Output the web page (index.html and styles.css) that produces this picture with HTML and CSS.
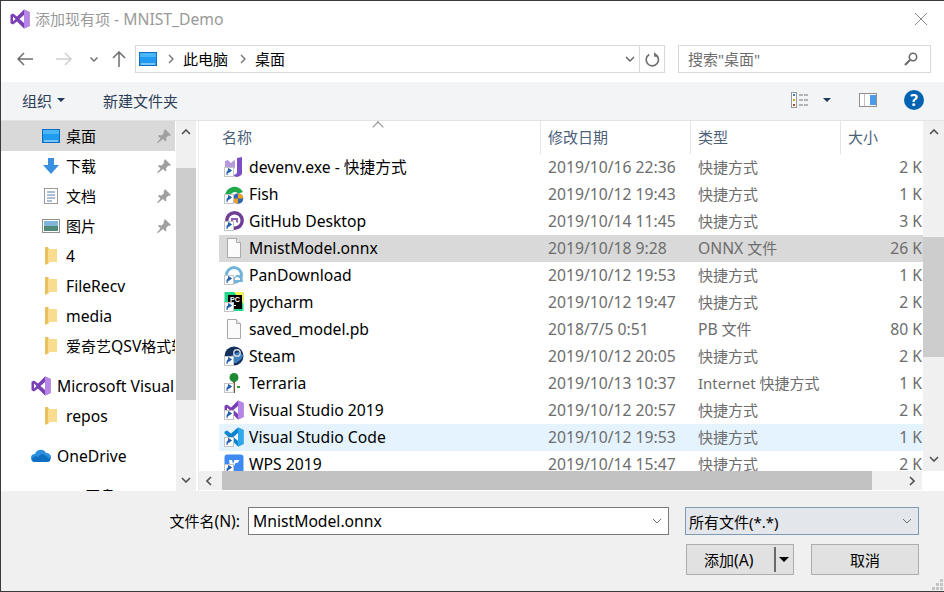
FILE: index.html
```html
<!DOCTYPE html>
<html lang="zh-CN">
<head>
    <meta charset="UTF-8">
    <title>添加现有项 - MNIST_Demo</title>
    <link rel="stylesheet" href="styles.css">
</head>
<body>
<svg class="defs" width="0" height="0">
    <defs>
        <symbol id="i-link" viewBox="0 0 20 20">
            <rect x="0.500" y="10.500" width="9" height="9" fill="#fff" stroke="#c4c4c4"/>
            <path d="M3 18v-2.500q0-2 2-2M4.500 11.500l3 2-3 2z" fill="#1f5fae" stroke="#1f5fae"/>
        </symbol>
        <symbol id="i-vs" viewBox="0 0 20 20">
            <path d="M14 0.500l5.500 2.500v14l-5.500 2.500-7-7-4 3-2.500-1.300v-8.400l2.500-1.300 4 3z" fill="#7b3fb5"/>
            <path d="M14 0.500l5.500 2.500v14l-5.500 2.500z" fill="#b685e6"/>
            <path d="M14 6l-4.500 4 4.500 4zM3 7.500v5l2.500-2.500z" fill="#fff"/>
        </symbol>
        <symbol id="i-code" viewBox="0 0 20 20">
            <path d="M14 0.500l5.500 2.500v14l-5.500 2.500-7-7-4 3-2.500-1.300v-1.700l3.500-3-3.500-3v-1.700l2.500-1.300 4 3z" fill="#0a84cf"/>
            <path d="M14 0.500l5.500 2.500v14l-5.500 2.500z" fill="#2fa9ec"/>
            <path d="M14 6l-4.500 4 4.500 4z" fill="#fff"/>
        </symbol>
        <symbol id="i-devenv" viewBox="0 0 20 20">
            <path d="M1 4l3-1 3 3 3-3 1 1v7l-4 3-3-2-3 2z" fill="#b79ade"/>
            <path d="M13 1l5-1v17q-2 3-6 3l-4-2q5 0 5-3z" fill="#7d4fc4"/>
        </symbol>
        <symbol id="i-fish" viewBox="0 0 20 20">
            <path d="M1 12a9.500 9.500 0 0 1 18-4l-4.500 1.500a5 5 0 0 0-8.500 2.500z" fill="#1fa94a"/>
            <circle cx="14" cy="14.500" r="5.300" fill="#2f66b5"/>
            <path d="M14 9.200a5.300 5.300 0 0 1 5.300 5.300H14zM8.700 14.500H14v5.300a5.300 5.300 0 0 1-5.300-5.300z" fill="#f0a020"/>
        </symbol>
        <symbol id="i-github" viewBox="0 0 20 20">
            <circle cx="10.500" cy="9.500" r="7.700" fill="#fff" stroke="#6e3e97" stroke-width="3.400"/>
            <path d="M7 7h7v5l-2-1v-2h-3v2H7z" fill="#8e5fb5"/>
        </symbol>
        <symbol id="i-pan" viewBox="0 0 20 20">
            <circle cx="10" cy="10" r="7.500" fill="#fff" stroke="#72b3d8" stroke-width="3"/>
            <path d="M6 17q-1-5 5-5 1-3 4-2 4 1 4 7z" fill="#72b3d8"/>
            <path d="M11 15q-1-2 2-3 3 0 3 3z" fill="#fff"/>
        </symbol>
        <symbol id="i-pycharm" viewBox="0 0 20 20">
            <rect x="0.500" y="0" width="19" height="19" fill="#21d789"/>
            <path d="M10 0h9.500v12z" fill="#fcf84a"/>
            <path d="M0.500 9l7 10h-7z" fill="#07c3f2"/>
            <rect x="4" y="3" width="14" height="14" fill="#000"/>
            <text class="pc-mark" x="6" y="10">PC</text>
            <rect x="6" y="13" width="6" height="1" fill="#fff"/>
        </symbol>
        <symbol id="i-steam" viewBox="0 0 20 20">
            <circle cx="10" cy="10" r="9.500" fill="#14305c"/>
            <path d="M1 13l6 3q4 3 8-1 4-3 4-6l-5-3z" fill="#3f7fc0"/>
            <circle cx="13" cy="7" r="3.200" fill="none" stroke="#d5dbe6" stroke-width="1.400"/>
            <circle cx="6.500" cy="14" r="2.200" fill="#d5dbe6"/>
        </symbol>
        <symbol id="i-terraria" viewBox="0 0 20 20">
            <rect x="9" y="7" width="2" height="13" fill="#7d5a3c"/>
            <circle cx="10" cy="4.500" r="4.500" fill="#1f8a34"/>
            <rect x="13" y="13" width="3" height="2" fill="#2f9a40"/>
        </symbol>
        <symbol id="i-wps" viewBox="0 0 20 20">
            <rect x="0.500" y="0.500" width="19" height="19" rx="3" fill="#3d8bf2"/>
            <path d="M5 6h3l1 4 1.500-4h5l-2 3h-2l-3 6-2 0z" fill="#fff"/>
        </symbol>
        <symbol id="i-doc" viewBox="0 0 20 20">
            <path d="M3.500 0.500h9l4 4v15h-13z" fill="#fbfbfb" stroke="#a8a8a8"/>
            <path d="M12.500 0.500v4h4" fill="#eee" stroke="#a8a8a8"/>
        </symbol>
        <symbol id="i-desk" viewBox="0 0 18 14">
            <rect x="0.500" y="0.500" width="17" height="13" fill="#1f9bf0" stroke="#0c6cc4"/>
            <rect x="1" y="1" width="16" height="4" fill="#49b6f7"/>
            <path d="M2 12h14" stroke="#d7efff"/>
        </symbol>
        <symbol id="i-folder" viewBox="0 0 14 18">
            <path d="M1 0h3l1 2v14l-4 2z" fill="#e8c15c"/>
            <path d="M4 2h9v13H5l-1 1z" fill="#f9dc8e"/>
        </symbol>
        <symbol id="i-pin" viewBox="0 0 14 14">
            <path d="M8 0l6 6-1.500 1-1-.5-2.500 2.500.5 2.500-1 1-2.500-2.500L1 14l-1-.5 3.500-4L1 7l1-1 2.500.5L7 4l-.5-1z" fill="#a0a0a0"/>
        </symbol>
    </defs>
</svg>

<div class="window">
    <div class="titlebar">
        <svg class="title-icon"><use href="#i-vs"/></svg>
        <span class="title-text">添加现有项<span class="latin"> - MNIST_Demo</span></span>
        <svg class="close" viewBox="0 0 14 14"><path d="M1 1l12 12M13 1L1 13" stroke="#8a8a8a" fill="none"/></svg>
    </div>

    <div class="navbar">
        <svg class="nav-back" viewBox="0 0 16 14"><path d="M1 7h15M7 1L1 7l6 6" stroke="#6d6d6d" stroke-width="1.500" fill="none"/></svg>
        <svg class="nav-forward" viewBox="0 0 16 14"><path d="M0 7h15M9 1l6 6-6 6" stroke="#d0d0d0" stroke-width="1.500" fill="none"/></svg>
        <svg class="nav-recent" viewBox="0 0 8 5"><path d="M0.500 0.500L4 4l3.500-3.500" stroke="#6d6d6d" stroke-width="1.400" fill="none"/></svg>
        <svg class="nav-up" viewBox="0 0 14 16"><path d="M7 16V1M1 7l6-6 6 6" stroke="#6d6d6d" stroke-width="1.500" fill="none"/></svg>
        <div class="address">
            <svg class="addr-icon"><use href="#i-desk"/></svg>
            <svg class="crumb-sep crumb-first" viewBox="0 0 6 10"><path d="M1 1l4 4-4 4" stroke="#707070" stroke-width="1.300" fill="none"/></svg>
            <span class="crumb">此电脑</span>
            <svg class="crumb-sep" viewBox="0 0 6 10"><path d="M1 1l4 4-4 4" stroke="#707070" stroke-width="1.300" fill="none"/></svg>
            <span class="crumb">桌面</span>
            <svg class="addr-drop" viewBox="0 0 10 6"><path d="M1 1l4 4 4-4" stroke="#606060" stroke-width="1.400" fill="none"/></svg>
            <div class="addr-refresh">
                <svg viewBox="0 0 14 14"><path d="M9.500 2.200A5.700 5.700 0 1 1 4 2.300" stroke="#6d6d6d" stroke-width="1.500" fill="none"/><path d="M8.500 0v4.500H13z" fill="#6d6d6d"/></svg>
            </div>
        </div>
        <div class="search">
            <span class="crumb">搜索"桌面"</span>
            <svg viewBox="0 0 14 14"><circle cx="9" cy="5" r="3.700" stroke="#666" stroke-width="1.500" fill="none"/><path d="M6 8l-5 5" stroke="#666" stroke-width="2"/></svg>
        </div>
    </div>

    <div class="toolbar">
        <span class="tool-menu">组织<i class="caret"></i></span>
        <span class="tool-new">新建文件夹</span>
        <svg class="tool-view" viewBox="0 0 18 16">
            <rect x="0.500" y="0.500" width="5" height="15" fill="#fff" stroke="#999"/>
            <rect x="2" y="2" width="2" height="2" fill="#3a7db5"/>
            <rect x="2" y="7" width="2" height="2" fill="#c7a02c"/>
            <rect x="2" y="12" width="2" height="2" fill="#b5432a"/>
            <path d="M8 3h10M8 8h10M8 13h10" stroke="#777" stroke-dasharray="4 1"/>
        </svg>
        <i class="caret tool-caret"></i>
        <svg class="tool-pane" viewBox="0 0 18 14">
            <rect x="0.500" y="0.500" width="17" height="13" fill="#fff" stroke="#8f8f8f"/>
            <rect x="5" y="1" width="1" height="12" fill="#c0c0c0"/>
            <rect x="11" y="2" width="6" height="10" fill="#4a9be8"/>
        </svg>
        <span class="tool-help">?</span>
    </div>

    <div class="main">
        <div class="sidebar">
            <div class="side-row is-current"><svg class="side-icon desk"><use href="#i-desk"/></svg><span>桌面</span><svg class="pin"><use href="#i-pin"/></svg></div>
            <div class="side-row">
                <svg class="side-icon desk" viewBox="0 0 18 16"><path d="M6 0h6v7h5l-8 9-8-9h5z" fill="#3b8fe0"/></svg>
                <span>下载</span><svg class="pin"><use href="#i-pin"/></svg>
            </div>
            <div class="side-row">
                <svg class="side-icon desk" viewBox="0 0 18 16"><rect x="2.500" y="0.500" width="13" height="15" fill="#fff" stroke="#9a9a9a"/><path d="M5 4h8M5 7h8M5 10h8M5 13h5" stroke="#5a7fa8"/></svg>
                <span>文档</span><svg class="pin"><use href="#i-pin"/></svg>
            </div>
            <div class="side-row">
                <svg class="side-icon desk" viewBox="0 0 18 14"><rect x="0.500" y="0.500" width="17" height="13" fill="#fff" stroke="#8f8f8f"/><rect x="2" y="2" width="14" height="5" fill="#7fb5dc"/><rect x="2" y="7" width="14" height="5" fill="#4f8a76"/></svg>
                <span>图片</span><svg class="pin"><use href="#i-pin"/></svg>
            </div>
            <div class="side-row"><svg class="side-icon folder"><use href="#i-folder"/></svg><span class="latin">4</span></div>
            <div class="side-row"><svg class="side-icon folder"><use href="#i-folder"/></svg><span class="latin">FileRecv</span></div>
            <div class="side-row"><svg class="side-icon folder"><use href="#i-folder"/></svg><span class="latin">media</span></div>
            <div class="side-row"><svg class="side-icon folder"><use href="#i-folder"/></svg><span>爱奇艺<span class="latin">QSV</span>格式转换</span></div>
            <div class="side-row side-group"><svg class="group-icon"><use href="#i-vs"/></svg><span class="latin">Microsoft Visual Studio</span></div>
            <div class="side-row"><svg class="side-icon folder"><use href="#i-folder"/></svg><span class="latin">repos</span></div>
            <div class="side-row side-group">
                <svg class="group-icon" viewBox="0 0 20 14"><path d="M4 13a4 4 0 0 1 0-8 6 6 0 0 1 11-1 4.500 4.500 0 0 1 1 9z" fill="#2a8fe0"/><path d="M1 10q2-4 6-2 4-5 8-1l4 3q1 3-3 3H4q-3 0-3-3z" fill="#0f6fc0"/></svg>
                <span class="latin">OneDrive</span>
            </div>
            <div class="side-row side-group">
                <svg class="group-icon" viewBox="0 0 20 14"><circle cx="10" cy="9" r="6" fill="#3d8bf2"/></svg>
                <span>wps网盘</span>
            </div>
        </div>
        <div class="side-scroll">
            <svg class="arrow" viewBox="0 0 10 6"><path d="M1 5l4-4 4 4" stroke="#505050" stroke-width="1.600" fill="none"/></svg>
            <div class="side-thumb"></div>
            <svg class="arrow arrow-end" viewBox="0 0 10 6"><path d="M1 1l4 4 4-4" stroke="#505050" stroke-width="1.600" fill="none"/></svg>
        </div>

        <div class="files">
            <div class="files-top">
                <div class="list">
                    <div class="list-head">
                        <div class="col col-name">名称<i class="sort"></i></div>
                        <div class="col">修改日期</div>
                        <div class="col">类型</div>
                        <div class="col">大小</div>
                    </div>
                    <div class="row"><div class="name"><svg><use href="#i-devenv"/><use href="#i-link"/></svg>devenv.exe - 快捷方式</div><div class="cell date">2019/10/16 22:36</div><div class="cell">快捷方式</div><div class="size">2 K</div></div>
                    <div class="row"><div class="name"><svg><use href="#i-fish"/><use href="#i-link"/></svg>Fish</div><div class="cell date">2019/10/12 19:43</div><div class="cell">快捷方式</div><div class="size">1 K</div></div>
                    <div class="row"><div class="name"><svg><use href="#i-github"/><use href="#i-link"/></svg>GitHub Desktop</div><div class="cell date">2019/10/14 11:45</div><div class="cell">快捷方式</div><div class="size">3 K</div></div>
                    <div class="row is-selected"><div class="name"><svg><use href="#i-doc"/></svg>MnistModel.onnx</div><div class="cell date">2019/10/18 9:28</div><div class="cell"><span class="latin">ONNX</span> 文件</div><div class="size">26 K</div></div>
                    <div class="row"><div class="name"><svg><use href="#i-pan"/><use href="#i-link"/></svg>PanDownload</div><div class="cell date">2019/10/12 19:53</div><div class="cell">快捷方式</div><div class="size">1 K</div></div>
                    <div class="row"><div class="name"><svg><use href="#i-pycharm"/><use href="#i-link"/></svg>pycharm</div><div class="cell date">2019/10/12 19:47</div><div class="cell">快捷方式</div><div class="size">2 K</div></div>
                    <div class="row"><div class="name"><svg><use href="#i-doc"/></svg>saved_model.pb</div><div class="cell date">2018/7/5 0:51</div><div class="cell"><span class="latin">PB</span> 文件</div><div class="size">80 K</div></div>
                    <div class="row"><div class="name"><svg><use href="#i-steam"/><use href="#i-link"/></svg>Steam</div><div class="cell date">2019/10/12 20:05</div><div class="cell">快捷方式</div><div class="size">2 K</div></div>
                    <div class="row"><div class="name"><svg><use href="#i-terraria"/><use href="#i-link"/></svg>Terraria</div><div class="cell date">2019/10/13 10:37</div><div class="cell">Internet 快捷方式</div><div class="size">1 K</div></div>
                    <div class="row"><div class="name"><svg><use href="#i-vs"/><use href="#i-link"/></svg>Visual Studio 2019</div><div class="cell date">2019/10/12 20:57</div><div class="cell">快捷方式</div><div class="size">2 K</div></div>
                    <div class="row is-hover"><div class="name"><svg><use href="#i-code"/><use href="#i-link"/></svg>Visual Studio Code</div><div class="cell date">2019/10/12 19:53</div><div class="cell">快捷方式</div><div class="size">1 K</div></div>
                    <div class="row"><div class="name"><svg><use href="#i-wps"/><use href="#i-link"/></svg>WPS 2019</div><div class="cell date">2019/10/14 15:47</div><div class="cell">快捷方式</div><div class="size">2 K</div></div>
                </div>
                <div class="list-scroll">
                    <svg class="arrow" viewBox="0 0 10 6"><path d="M1 5l4-4 4 4" stroke="#505050" stroke-width="1.600" fill="none"/></svg>
                    <div class="list-thumb"></div>
                    <svg class="arrow arrow-end" viewBox="0 0 10 6"><path d="M1 1l4 4 4-4" stroke="#505050" stroke-width="1.600" fill="none"/></svg>
                </div>
            </div>
            <div class="hscroll">
                <svg class="harrow" viewBox="0 0 6 10"><path d="M5 1L1 5l4 4" stroke="#505050" stroke-width="1.600" fill="none"/></svg>
                <div class="hthumb"></div>
                <svg class="harrow" viewBox="0 0 6 10"><path d="M1 1l4 4-4 4" stroke="#505050" stroke-width="1.600" fill="none"/></svg>
            </div>
        </div>
    </div>

    <div class="footer">
        <div class="file-row">
            <label class="file-label">文件名<span class="latin">(N):</span></label>
            <div class="file-input">
                <span class="latin">MnistModel.onnx</span>
                <svg viewBox="0 0 10 6"><path d="M1 1l4 4 4-4" stroke="#707070" fill="none"/></svg>
            </div>
            <div class="file-type">
                <span>所有文件(*.*)</span>
                <svg viewBox="0 0 10 6"><path d="M1 1l4 4 4-4" stroke="#707070" fill="none"/></svg>
            </div>
        </div>
        <div class="button-row">
            <div class="btn btn-split"><span class="btn-label">添加<span class="latin">(A)</span></span><i class="btn-div"></i><i class="btn-caret"></i></div>
            <div class="btn">取消</div>
        </div>
        <svg class="grip" viewBox="0 0 11 11"><path d="M8 0h3v3H8zM4 4h3v3H4zM8 4h3v3H8zM0 8h3v3H0zM4 8h3v3H4zM8 8h3v3H8z" fill="#c4c4c4"/></svg>
    </div>
</div>
</body>
</html>
```

FILE: styles.css
```css
* {
    box-sizing: border-box;
}

html, body {
    margin: 0;
    height: 100%;
    overflow: hidden;
}

body {
    font-family: "Noto Sans", "Noto Sans CJK SC", sans-serif;
    font-size: 15px;
    color: #000;
    background-color: #fff;
}

/* latin text runs a little larger than the CJK next to it */
.latin {
    font-size: 15.7px;
}

.defs {
    display: block;
    position: absolute;
}

.window {
    position: relative;
    display: flex;
    flex-direction: column;
    width: 944px;
    height: 592px;
    border-top: 1px solid #3a3a3a;
    border-left: 1px solid #3a3a3a;
    border-bottom: 1px solid #3a3a3a;
}

/* title bar */
.titlebar {
    display: flex;
    align-items: center;
    flex: 0 0 37px;
    padding-left: 9px;
    padding-right: 16px;
    padding-bottom: 1px;
}

.title-icon {
    width: 20px;
    height: 20px;
    margin-right: 5px;
}

.title-text {
    color: #999;
}

.close {
    width: 14px;
    height: 14px;
    margin-left: auto;
}

/* back/forward, address, search */
.navbar {
    display: flex;
    align-items: center;
    flex: 0 0 44px;
    padding-bottom: 2px;
}

.nav-back {
    width: 16px;
    height: 14px;
    margin-left: 16px;
}

.nav-forward {
    width: 16px;
    height: 14px;
    margin-left: 23px;
}

.nav-recent {
    width: 8px;
    height: 5px;
    margin-left: 18px;
}

.nav-up {
    width: 14px;
    height: 16px;
    margin-left: 14px;
}

.address {
    display: flex;
    align-items: center;
    width: 530px;
    height: 28px;
    margin-left: 9px;
    padding-left: 3px;
    border: 1px solid #d9d9d9;
}

.crumb {
    padding-bottom: 2px;
}

.addr-icon {
    width: 18px;
    height: 14px;
}

.crumb-sep {
    width: 6px;
    height: 10px;
    margin: 0 9px 0 12px;
}

.crumb-first {
    margin-left: 11px;
    margin-right: 9px;
}

.addr-drop {
    width: 10px;
    height: 6px;
    margin-left: auto;
    margin-right: 4px;
}

.addr-refresh {
    display: flex;
    align-items: center;
    justify-content: center;
    width: 25px;
    height: 100%;
    border-left: 1px solid #d9d9d9;
}

.addr-refresh svg {
    width: 15px;
    height: 15px;
}

.search {
    display: flex;
    align-items: center;
    justify-content: space-between;
    width: 253px;
    height: 28px;
    margin-left: 13px;
    padding: 0 12px 0 9px;
    border: 1px solid #d9d9d9;
    color: #6d6d6d;
}

.search svg {
    width: 14px;
    height: 14px;
}

/* toolbar */
.toolbar {
    display: flex;
    align-items: center;
    flex: 0 0 39px;
    padding-left: 21px;
    padding-bottom: 2px;
    background-color: #f3f4f6;
    border-bottom: 1px solid #e3e3e3;
    color: #2c3e56;
}

.tool-menu {
    display: flex;
    align-items: center;
}

.caret {
    width: 0;
    height: 0;
    border-left: 4px solid transparent;
    border-right: 4px solid transparent;
    border-top: 4px solid #1e395b;
}

.tool-menu .caret {
    margin-left: 5px;
}

.tool-new {
    margin-left: 38px;
}

.tool-view {
    width: 18px;
    height: 16px;
    margin-left: auto;
}

.tool-caret {
    margin-left: 14px;
}

.tool-pane {
    width: 18px;
    height: 14px;
    margin-left: 28px;
}

.tool-help {
    display: flex;
    align-items: center;
    justify-content: center;
    width: 20px;
    height: 20px;
    margin-left: 27px;
    margin-right: 20px;
    border-radius: 50%;
    background-color: #0063b1;
    color: #fff;
    font-weight: 700;
    font-size: 16px;
}

/* main area */
.main {
    display: flex;
    flex: 0 0 370px;
    min-height: 0;
}

.sidebar {
    width: 175px;
    overflow: hidden;
    flex: none;
}

.side-row {
    display: flex;
    align-items: center;
    width: 174px;
    height: 30px;
    padding-left: 41px;
    padding-bottom: 1px;
    white-space: nowrap;
    overflow: hidden;
}

.side-row.is-current {
    background-color: #d9d9d9;
}

.side-group {
    margin-top: 10px;
    padding-left: 30px;
}

.side-icon {
    flex: none;
    width: 18px;
    height: 14px;
    margin-right: 6px;
}

.side-icon.desk {
    height: 16px;
}

.side-icon.folder {
    width: 14px;
    height: 18px;
    margin-left: 2px;
    margin-right: 8px;
}

.group-icon {
    flex: none;
    width: 20px;
    height: 20px;
    margin-right: 6px;
}

.side-group:last-child .group-icon {
    height: 14px;
}

.pin {
    width: 14px;
    height: 14px;
    margin-left: auto;
    margin-right: 4px;
}

.side-scroll {
    display: flex;
    flex-direction: column;
    align-items: center;
    flex: none;
    width: 20px;
    background-color: #f0f0f0;
}

.arrow {
    flex: none;
    width: 10px;
    height: 6px;
    margin-top: 8px;
}

.arrow-end {
    margin-top: auto;
    margin-bottom: 8px;
}

.side-thumb {
    width: 100%;
    height: 232px;
    margin-top: 33px;
    background-color: #cdcdcd;
}

.files {
    display: flex;
    flex-direction: column;
    flex: 1;
    min-width: 0;
    margin-left: 2px;
    border-left: 1px solid #ececec;
}

.files-top {
    display: flex;
    flex: 0 0 350px;
    min-height: 0;
}

.list {
    flex: 1;
    padding-left: 20px;
    overflow: hidden;
}

.list-head {
    display: grid;
    grid-template-columns: 322px 150px 150px 1fr;
    height: 33px;
    color: #4c607a;
}

.col {
    position: relative;
    display: flex;
    align-items: center;
    padding-left: 7px;
    padding-bottom: 3px;
    border-right: 1px solid #e5e5e5;
}

.col-name {
    padding-left: 3px;
}

.list-head .col:last-child {
    border-right: none;
}

.sort {
    position: absolute;
    top: 2px;
    left: 155px;
    width: 8px;
    height: 8px;
    border-top: 1px solid #8a8a8a;
    border-left: 1px solid #8a8a8a;
    transform: rotate(45deg);
}

.row {
    display: grid;
    grid-template-columns: 322px 150px 150px 1fr;
    align-items: center;
    height: 27px;
    white-space: nowrap;
    padding-bottom: 2px;
}

.row.is-selected {
    background-color: #d9d9d9;
}

.row.is-hover {
    background-color: #e5f3ff;
}

.name {
    display: flex;
    align-items: center;
    padding-left: 5px;
    font-size: 15.7px;
}

.name svg {
    width: 20px;
    height: 20px;
    margin-right: 5px;
    flex: none;
}

.cell {
    padding-left: 7px;
    color: #6d6d6d;
}

.date {
    font-size: 15.7px;
}

.size {
    text-align: right;
    padding-right: 1px;
    font-size: 15.7px;
    color: #6d6d6d;
}

.list-scroll {
    display: flex;
    flex-direction: column;
    align-items: center;
    flex: none;
    width: 21px;
    background-color: #f0f0f0;
}

.list-scroll .arrow-end {
    margin-bottom: 9px;
}

.list-thumb {
    width: 100%;
    height: 120px;
    margin-top: 102px;
    background-color: #cdcdcd;
}

.hscroll {
    display: flex;
    align-items: center;
    flex: 0 0 19px;
    width: 723px;
    background-color: #f0f0f0;
}

.harrow {
    flex: none;
    width: 6px;
    height: 10px;
    margin-left: 7px;
}

.hthumb {
    width: 650px;
    height: 100%;
    margin-left: 10px;
    margin-right: 30px;
    background-color: #c2c2c2;
}

/* file name, type, buttons */
.footer {
    flex: 1;
    padding-top: 16px;
    background-color: #f0f0f0;
}

.file-row {
    display: flex;
    align-items: center;
}

.file-label {
    width: 239px;
    text-align: right;
}

.file-input {
    display: flex;
    align-items: center;
    justify-content: space-between;
    width: 421px;
    height: 28px;
    margin-left: 8px;
    padding: 0 6px 0 4px;
    background-color: #fff;
    border: 1px solid #7a7a7a;
}

.file-input svg, .file-type svg {
    width: 10px;
    height: 6px;
}

.file-type {
    display: flex;
    align-items: center;
    justify-content: space-between;
    width: 234px;
    height: 28px;
    margin-left: 16px;
    padding: 0 6px 0 3px;
    background-color: #e3e6ea;
    border: 1px solid #7b9bb6;
}

.button-row {
    display: flex;
    justify-content: flex-end;
    gap: 17px;
    margin-top: 9px;
    padding-right: 25px;
}

.btn {
    display: flex;
    align-items: center;
    justify-content: center;
    width: 108px;
    height: 31px;
    background-color: #e1e1e1;
    border: 1px solid #adadad;
}

.btn-split {
    justify-content: flex-start;
    padding-left: 17px;
}

.btn-div {
    width: 2px;
    height: 25px;
    margin-left: auto;
    background-color: #6a6a6a;
}

.btn-caret {
    width: 0;
    height: 0;
    margin-left: 3px;
    margin-right: 4px;
    border-left: 5px solid transparent;
    border-right: 5px solid transparent;
    border-top: 5px solid #000;
}

.grip {
    position: absolute;
    right: 1px;
    bottom: 1px;
    width: 11px;
    height: 11px;
}

.pc-mark {
    font-family: "Liberation Sans", sans-serif;
    font-size: 7px;
    font-weight: 700;
    fill: #fff;
}
```
